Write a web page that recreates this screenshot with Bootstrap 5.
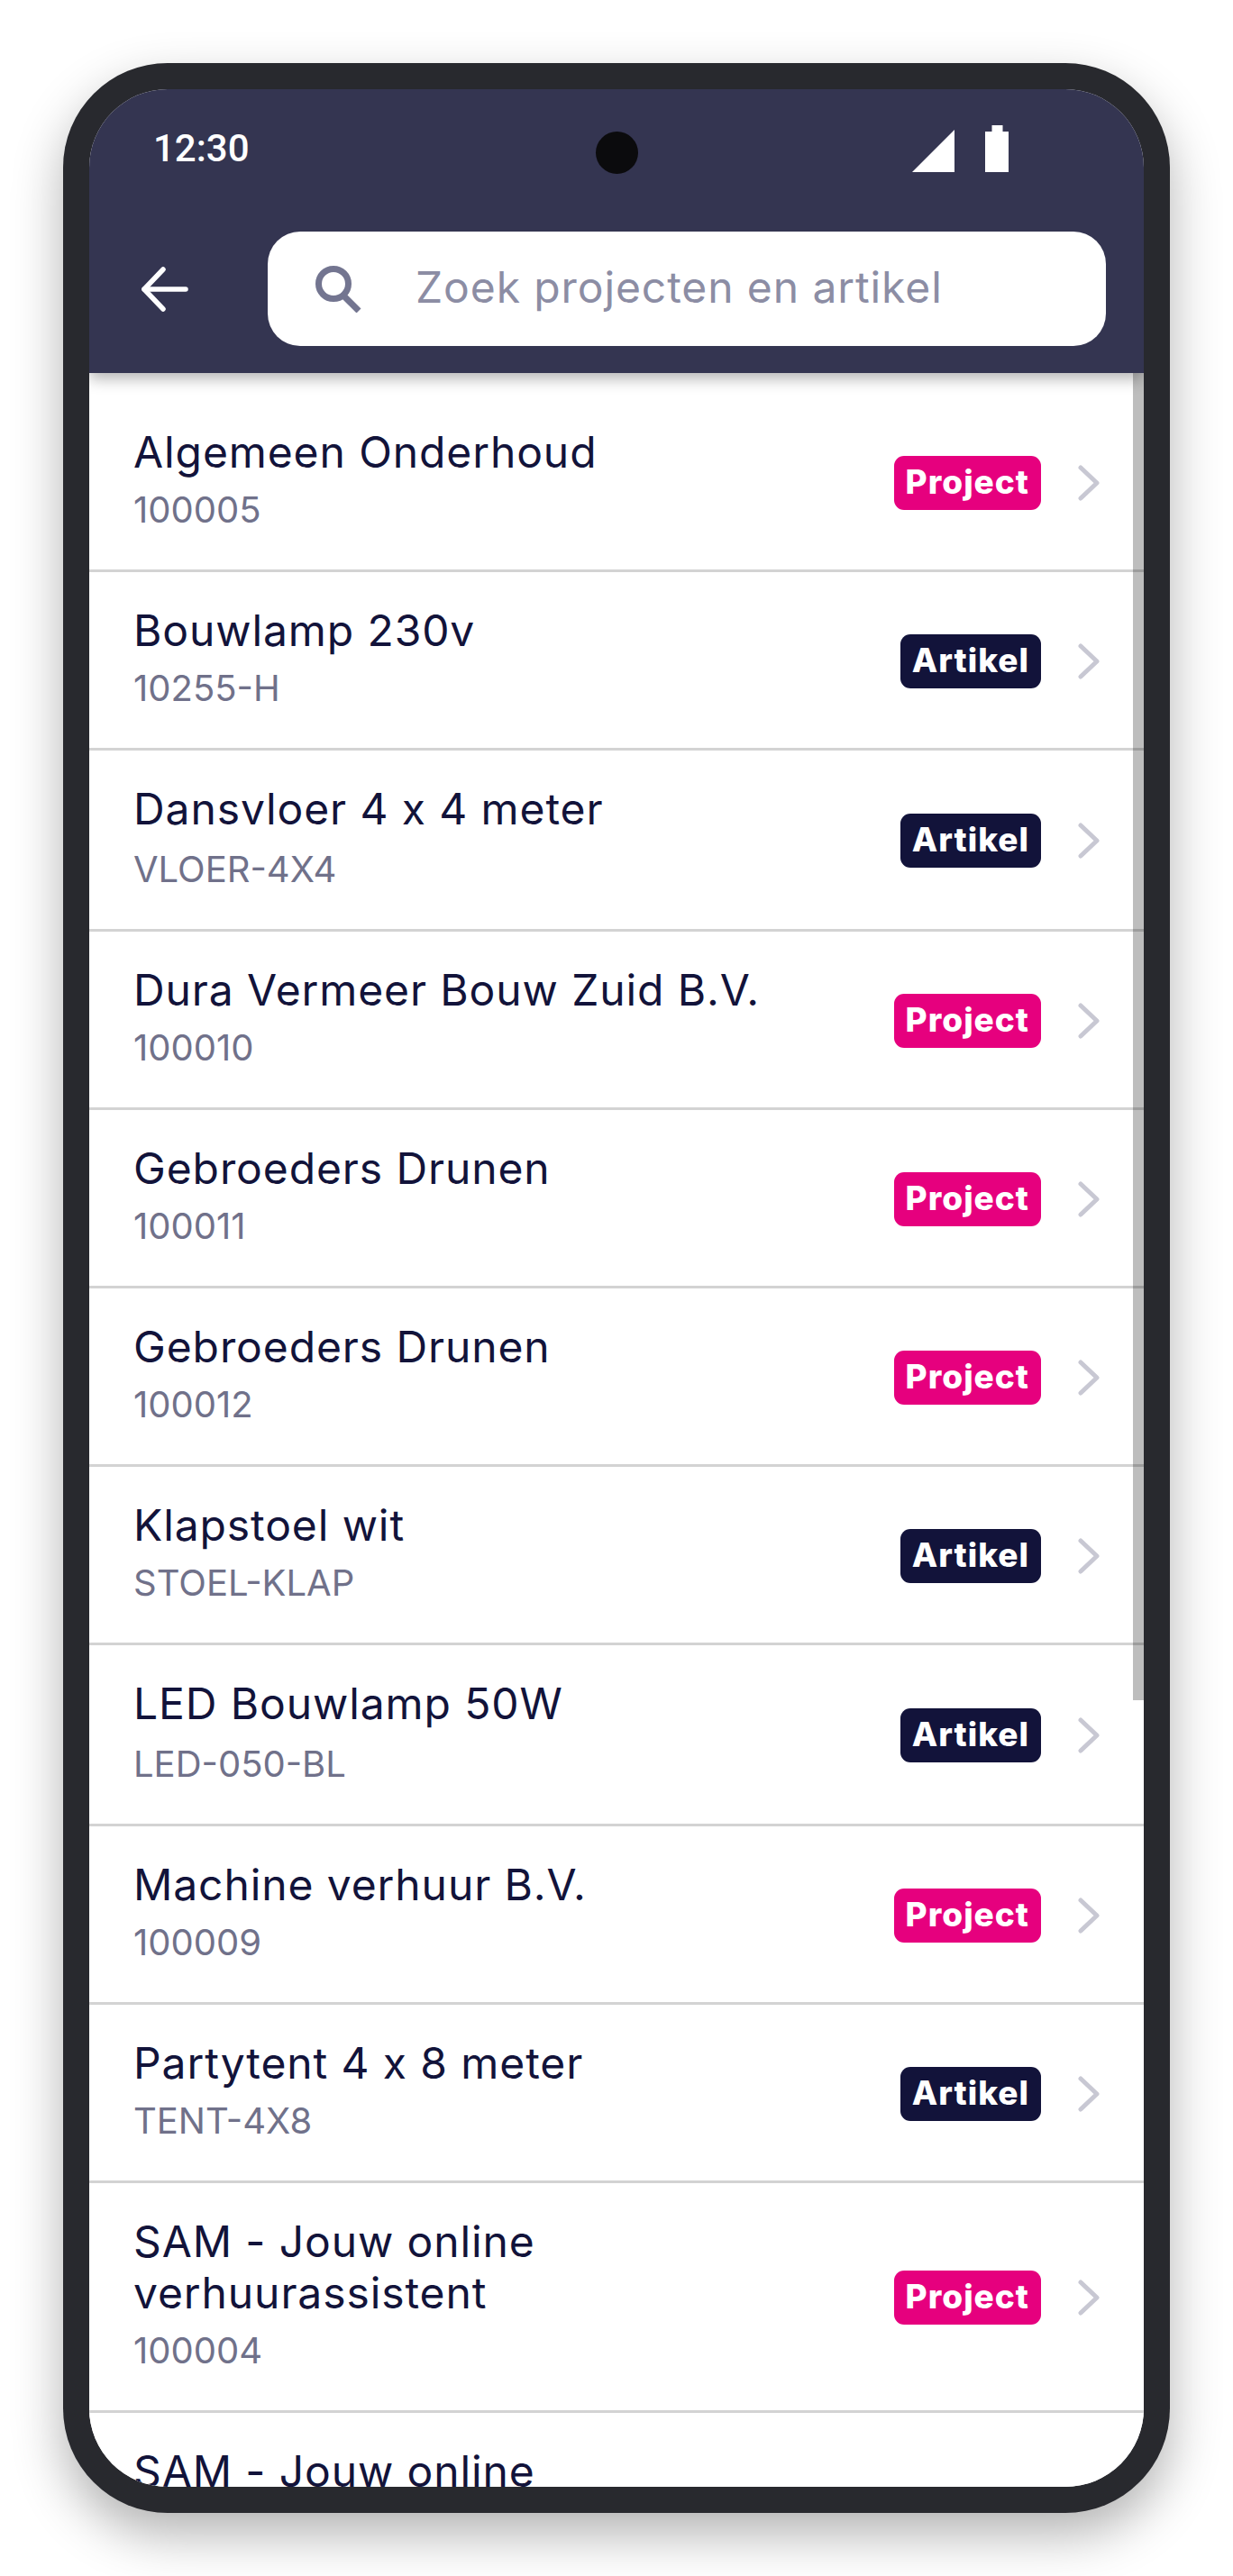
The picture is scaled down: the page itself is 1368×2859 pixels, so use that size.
<!DOCTYPE html>
<html lang="en">
<head>
    <meta charset="UTF-8">
    <meta name="viewport" content="width=device-width, initial-scale=1.0">
    <title>Zoek projecten en artikel</title>
    <link href="https://cdn.jsdelivr.net/npm/bootstrap@5.3.1/dist/css/bootstrap.min.css" rel="stylesheet">
    <style>
        html, body {
            height: 2859px;
            overflow: hidden;
            background-color: #fff;
        }
        body {
            padding-top: 70px;
            font-family: "Inter", "Liberation Sans", sans-serif;
        }
        .phone-frame {
            width: 1228px;
            height: 2719px;
            margin-left: 70px;
            padding: 29px;
            background-color: #28292e;
            border-radius: 116px;
            box-shadow: 0 24px 56px rgba(0, 0, 0, 0.3);
        }
        .phone-screen {
            position: relative;
            height: 100%;
            overflow: hidden;
            background-color: #fff;
            border-radius: 87px;
        }
        .app-header {
            position: relative;
            z-index: 2;
            height: 315px;
            background-color: #343551;
            box-shadow: 0 6px 16px rgba(0, 0, 0, 0.3);
        }
        .status-row {
            height: 158px;
            padding: 31px 150px 0 71px;
        }
        .status-time {
            font-family: "Roboto", sans-serif;
            font-size: 42px;
            font-weight: 500;
            line-height: 70px;
            color: #fff;
        }
        .status-icons {
            margin-top: 9px;
        }
        .status-camera {
            position: absolute;
            top: 47px;
            left: 562px;
            width: 47px;
            height: 47px;
            border-radius: 50%;
            background-color: #0b0b0d;
        }
        .toolbar-row {
            padding: 0 42px 0 58px;
        }
        .back-arrow {
            width: 52px;
            height: 50px;
            margin-right: 88px;
        }
        .search-box {
            height: 127px;
            padding-left: 53px;
            border-radius: 36px;
        }
        .search-box input {
            padding: 0 0 3px 60px;
            border: 0;
            outline: 0;
            font-size: 48px;
            letter-spacing: 0.9px;
            color: #343551;
            background: transparent;
        }
        .search-box input::placeholder {
            color: #8c8da4;
            opacity: 1;
        }
        .result-list .list-group-item {
            padding: 36px 49px 38px 49px;
            border-width: 0 0 3px;
            border-color: #d3d3d3;
        }
        .result-list .list-group-item:first-child {
            padding-top: 59px;
        }
        .item-title {
            max-width: 760px;
            font-size: 48px;
            line-height: 57px;
            letter-spacing: 0.9px;
            color: #12133a;
        }
        .item-code {
            margin-top: 8px;
            font-size: 40px;
            line-height: 56px;
            color: #70718a;
        }
        .item-code-low {
            margin-top: 11px;
        }
        .item-tag {
            height: 60px;
            margin-top: 4px;
            padding: 0 13px;
            border-radius: 11px;
            font-size: 37px;
            font-weight: 800;
            line-height: 58px;
            letter-spacing: 1px;
            color: #fff;
        }
        .tag-project {
            background-color: #e6007e;
        }
        .tag-artikel {
            background-color: #12133a;
        }
        .item-chevron {
            width: 24px;
            height: 40px;
            margin-top: 4px;
            margin-left: 41px;
        }
        .scroll-thumb {
            position: absolute;
            z-index: 1;
            top: 315px;
            right: 0;
            width: 12px;
            height: 1473px;
            background-color: rgba(0, 0, 0, 0.26);
        }
    </style>
</head>
<body>
<div class="phone-frame">
    <div class="phone-screen">
        <div class="app-header">
            <div class="status-row d-flex align-items-start">
                <span class="status-time">12:30</span>
                <svg class="status-icons ms-auto" width="107" height="52" viewBox="0 0 107 52">
                    <polygon points="0,52 47,5 47,52" fill="#fff"/>
                    <path d="M81 7H88.500V0H100.500V7H107V52H81Z" fill="#fff"/>
                </svg>
            </div>
            <div class="status-camera"></div>
            <div class="toolbar-row d-flex align-items-center">
                <svg class="back-arrow flex-shrink-0" viewBox="0 0 52 50" fill="none" stroke="#fff" stroke-width="5.500" stroke-linecap="round" stroke-linejoin="round">
                    <path d="M3 25H49"/>
                    <path d="M24 3L3 25L24 47"/>
                </svg>
                <div class="search-box d-flex align-items-center flex-grow-1 bg-white">
                    <svg class="flex-shrink-0" width="51" height="52" viewBox="0 0 51 52" fill="none" stroke="#737590" stroke-width="7">
                        <circle cx="20" cy="20" r="16.500"/>
                        <path d="M31 33L48 50"/>
                    </svg>
                    <input class="flex-grow-1 w-100" type="text" placeholder="Zoek projecten en artikel">
                </div>
            </div>
        </div>

        <div class="scroll-thumb"></div>

        <div class="list-group list-group-flush result-list">
            <a class="list-group-item d-flex align-items-center" href="#">
                <div class="flex-grow-1">
                    <div class="item-title">Algemeen Onderhoud</div>
                    <div class="item-code">100005</div>
                </div>
                <span class="item-tag tag-project">Project</span>
                <svg class="item-chevron" viewBox="0 0 24 40" fill="none" stroke="#c8c8d3" stroke-width="5" stroke-linecap="round" stroke-linejoin="round"><path d="M3 3L21 20L3 37"/></svg>
            </a>
            <a class="list-group-item d-flex align-items-center" href="#">
                <div class="flex-grow-1">
                    <div class="item-title">Bouwlamp 230v</div>
                    <div class="item-code">10255-H</div>
                </div>
                <span class="item-tag tag-artikel">Artikel</span>
                <svg class="item-chevron" viewBox="0 0 24 40" fill="none" stroke="#c8c8d3" stroke-width="5" stroke-linecap="round" stroke-linejoin="round"><path d="M3 3L21 20L3 37"/></svg>
            </a>
            <a class="list-group-item d-flex align-items-center" href="#">
                <div class="flex-grow-1">
                    <div class="item-title">Dansvloer 4 x 4 meter</div>
                    <div class="item-code item-code-low">VLOER-4X4</div>
                </div>
                <span class="item-tag tag-artikel">Artikel</span>
                <svg class="item-chevron" viewBox="0 0 24 40" fill="none" stroke="#c8c8d3" stroke-width="5" stroke-linecap="round" stroke-linejoin="round"><path d="M3 3L21 20L3 37"/></svg>
            </a>
            <a class="list-group-item d-flex align-items-center" href="#">
                <div class="flex-grow-1">
                    <div class="item-title">Dura Vermeer Bouw Zuid B.V.</div>
                    <div class="item-code">100010</div>
                </div>
                <span class="item-tag tag-project">Project</span>
                <svg class="item-chevron" viewBox="0 0 24 40" fill="none" stroke="#c8c8d3" stroke-width="5" stroke-linecap="round" stroke-linejoin="round"><path d="M3 3L21 20L3 37"/></svg>
            </a>
            <a class="list-group-item d-flex align-items-center" href="#">
                <div class="flex-grow-1">
                    <div class="item-title">Gebroeders Drunen</div>
                    <div class="item-code">100011</div>
                </div>
                <span class="item-tag tag-project">Project</span>
                <svg class="item-chevron" viewBox="0 0 24 40" fill="none" stroke="#c8c8d3" stroke-width="5" stroke-linecap="round" stroke-linejoin="round"><path d="M3 3L21 20L3 37"/></svg>
            </a>
            <a class="list-group-item d-flex align-items-center" href="#">
                <div class="flex-grow-1">
                    <div class="item-title">Gebroeders Drunen</div>
                    <div class="item-code">100012</div>
                </div>
                <span class="item-tag tag-project">Project</span>
                <svg class="item-chevron" viewBox="0 0 24 40" fill="none" stroke="#c8c8d3" stroke-width="5" stroke-linecap="round" stroke-linejoin="round"><path d="M3 3L21 20L3 37"/></svg>
            </a>
            <a class="list-group-item d-flex align-items-center" href="#">
                <div class="flex-grow-1">
                    <div class="item-title">Klapstoel wit</div>
                    <div class="item-code">STOEL-KLAP</div>
                </div>
                <span class="item-tag tag-artikel">Artikel</span>
                <svg class="item-chevron" viewBox="0 0 24 40" fill="none" stroke="#c8c8d3" stroke-width="5" stroke-linecap="round" stroke-linejoin="round"><path d="M3 3L21 20L3 37"/></svg>
            </a>
            <a class="list-group-item d-flex align-items-center" href="#">
                <div class="flex-grow-1">
                    <div class="item-title">LED Bouwlamp 50W</div>
                    <div class="item-code item-code-low">LED-050-BL</div>
                </div>
                <span class="item-tag tag-artikel">Artikel</span>
                <svg class="item-chevron" viewBox="0 0 24 40" fill="none" stroke="#c8c8d3" stroke-width="5" stroke-linecap="round" stroke-linejoin="round"><path d="M3 3L21 20L3 37"/></svg>
            </a>
            <a class="list-group-item d-flex align-items-center" href="#">
                <div class="flex-grow-1">
                    <div class="item-title">Machine verhuur B.V.</div>
                    <div class="item-code">100009</div>
                </div>
                <span class="item-tag tag-project">Project</span>
                <svg class="item-chevron" viewBox="0 0 24 40" fill="none" stroke="#c8c8d3" stroke-width="5" stroke-linecap="round" stroke-linejoin="round"><path d="M3 3L21 20L3 37"/></svg>
            </a>
            <a class="list-group-item d-flex align-items-center" href="#">
                <div class="flex-grow-1">
                    <div class="item-title">Partytent 4 x 8 meter</div>
                    <div class="item-code">TENT-4X8</div>
                </div>
                <span class="item-tag tag-artikel">Artikel</span>
                <svg class="item-chevron" viewBox="0 0 24 40" fill="none" stroke="#c8c8d3" stroke-width="5" stroke-linecap="round" stroke-linejoin="round"><path d="M3 3L21 20L3 37"/></svg>
            </a>
            <a class="list-group-item d-flex align-items-center" href="#">
                <div class="flex-grow-1">
                    <div class="item-title">SAM - Jouw online verhuurassistent</div>
                    <div class="item-code">100004</div>
                </div>
                <span class="item-tag tag-project">Project</span>
                <svg class="item-chevron" viewBox="0 0 24 40" fill="none" stroke="#c8c8d3" stroke-width="5" stroke-linecap="round" stroke-linejoin="round"><path d="M3 3L21 20L3 37"/></svg>
            </a>
            <a class="list-group-item d-flex align-items-center" href="#">
                <div class="flex-grow-1">
                    <div class="item-title">SAM - Jouw online verhuurassistent</div>
                    <div class="item-code">100004</div>
                </div>
                <span class="item-tag tag-project">Project</span>
                <svg class="item-chevron" viewBox="0 0 24 40" fill="none" stroke="#c8c8d3" stroke-width="5" stroke-linecap="round" stroke-linejoin="round"><path d="M3 3L21 20L3 37"/></svg>
            </a>
        </div>
    </div>
</div>
<script src="https://cdn.jsdelivr.net/npm/bootstrap@5.3.1/dist/js/bootstrap.bundle.min.js"></script>
</body>
</html>
